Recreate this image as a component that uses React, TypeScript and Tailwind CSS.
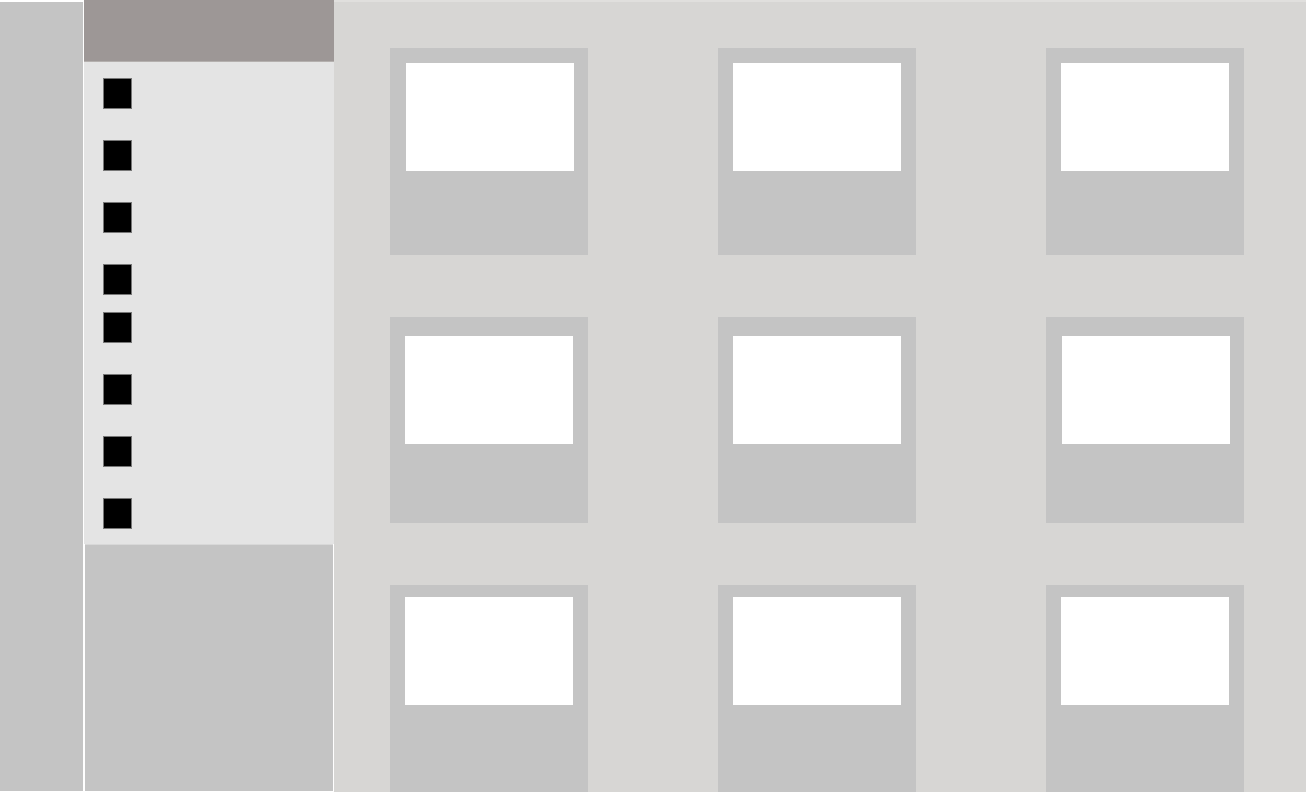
// left offsets of the white preview inside each card, row by row
const cards = [
  { top: "mt-[15px]", h: "h-[207px]", left: ["ml-[16px]", "ml-[15px]", "ml-[15px]"] },
  { top: "mt-[19px]", h: "h-[206px]", left: ["ml-[15px]", "ml-[15px]", "ml-[16px]"] },
  { top: "mt-[12px]", h: "h-[207px]", left: ["ml-[15px]", "ml-[15px]", "ml-[15px]"] },
]

const navItems = [0, 1, 2, 3, 4, 5, 6, 7]

export default function App() {
  return (
    <div className="flex h-[792px] w-[1306px] overflow-hidden bg-white">
      {/* far left rail */}
      <div className="mt-[2px] mb-[1px] w-[83px] shrink-0 bg-[#c4c4c4]" />

      {/* sidebar */}
      <div className="ml-[1px] flex w-[250px] shrink-0 flex-col">
        <div className="h-[62px] border-b border-[#b4b0ae] bg-[#9d9796]" />
        <div className="flex h-[482px] flex-col bg-[#e4e4e4] pl-[19px] pt-[16px]">
          {navItems.map((i) => (
            <div
              key={i}
              className={`h-[31px] w-[29px] border border-[#777] bg-black ${
                i === 4 ? "mt-[17px]" : i === 0 ? "" : "mt-[31px]"
              }`}
            />
          ))}
        </div>
        <div className="mb-[1px] ml-[1px] mr-[1px] flex-1 border-t border-[#d8d8d8] bg-[#c4c4c4]" />
      </div>

      {/* main grid */}
      <div className="flex-1 border-t-2 border-[#e0dfdd] bg-[#d7d6d4] pl-[56px] pt-[46px]">
        <div className="flex flex-col gap-y-[62px]">
          {cards.map((row, r) => (
            <div key={r} className="flex gap-x-[130px]">
              {row.left.map((ml, c) => (
                <div key={c} className={`${row.h} w-[198px] bg-[#c4c4c4]`}>
                  <div className={`h-[108px] w-[168px] bg-white ${row.top} ${ml}`} />
                </div>
              ))}
            </div>
          ))}
        </div>
      </div>
    </div>
  )
}
